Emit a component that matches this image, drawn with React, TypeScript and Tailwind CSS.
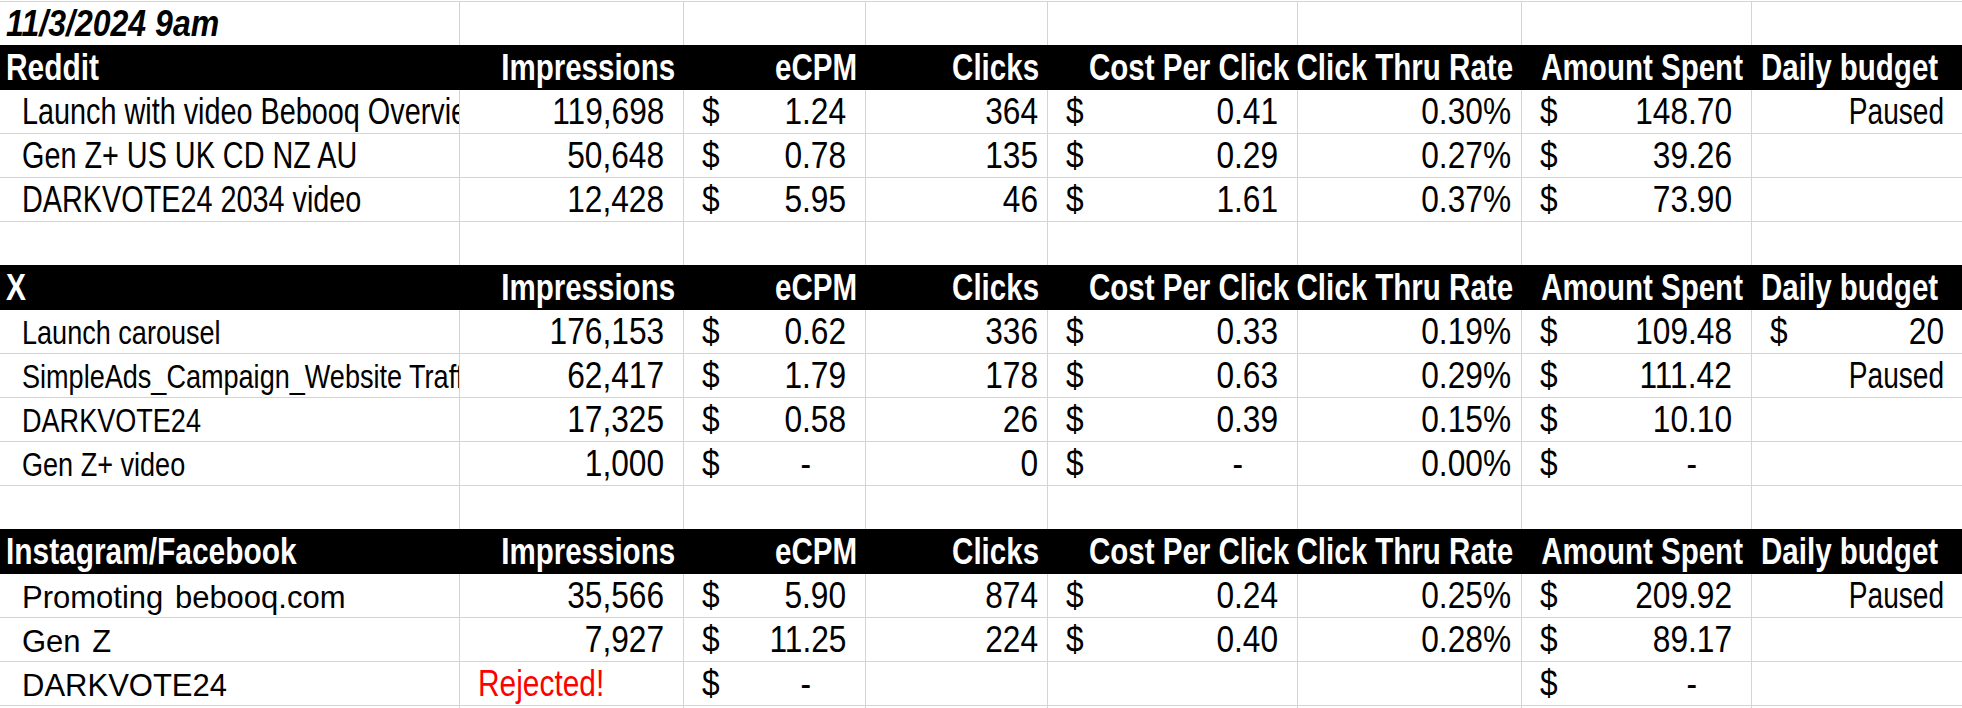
import React from "react";

type Money = string | null | undefined; // null = "-" dash, undefined = empty cell

type AdRow = {
  label: string;
  impressions?: string;
  rejected?: boolean;
  ecpm?: Money;
  clicks?: string;
  cpc?: Money;
  ctr?: string;
  spent?: Money;
  budget?: "paused" | string;
};

type Section = {
  name: string;
  labelClass: string;
  rows: AdRow[];
};

// Excel's Aptos Narrow isn't around, so Liberation Sans gets squeezed horizontally
const sections: Section[] = [
  {
    name: "Reddit",
    labelClass: "text-[36px] scale-x-[0.8]",
    rows: [
      { label: "Launch with video Bebooq Overview", impressions: "119,698", ecpm: "1.24", clicks: "364", cpc: "0.41", ctr: "0.30%", spent: "148.70", budget: "paused" },
      { label: "Gen Z+ US UK CD NZ AU", impressions: "50,648", ecpm: "0.78", clicks: "135", cpc: "0.29", ctr: "0.27%", spent: "39.26" },
      { label: "DARKVOTE24 2034 video", impressions: "12,428", ecpm: "5.95", clicks: "46", cpc: "1.61", ctr: "0.37%", spent: "73.90" },
    ],
  },
  {
    name: "X",
    labelClass: "text-[33px] scale-x-[0.82]",
    rows: [
      { label: "Launch carousel", impressions: "176,153", ecpm: "0.62", clicks: "336", cpc: "0.33", ctr: "0.19%", spent: "109.48", budget: "20" },
      { label: "SimpleAds_Campaign_Website Traffic", impressions: "62,417", ecpm: "1.79", clicks: "178", cpc: "0.63", ctr: "0.29%", spent: "111.42", budget: "paused" },
      { label: "DARKVOTE24", impressions: "17,325", ecpm: "0.58", clicks: "26", cpc: "0.39", ctr: "0.15%", spent: "10.10" },
      { label: "Gen Z+ video", impressions: "1,000", ecpm: null, clicks: "0", cpc: null, ctr: "0.00%", spent: null },
    ],
  },
  {
    name: "Instagram/Facebook",
    labelClass: "text-[31px] [word-spacing:3px]",
    rows: [
      { label: "Promoting bebooq.com", impressions: "35,566", ecpm: "5.90", clicks: "874", cpc: "0.24", ctr: "0.25%", spent: "209.92", budget: "paused" },
      { label: "Gen Z", impressions: "7,927", ecpm: "11.25", clicks: "224", cpc: "0.40", ctr: "0.28%", spent: "89.17" },
      { label: "DARKVOTE24", rejected: true, ecpm: null, spent: null },
    ],
  },
];

const headers = ["Impressions", "eCPM", "Clicks", "Cost Per Click", "Click Thru Rate", "Amount Spent"];

const grid = "grid grid-cols-[460px_224px_182px_182px_250px_224px_230px_212px]";
const cell = "border-r border-[#d4d4d4] overflow-hidden whitespace-nowrap leading-[43px] h-[43px]";
const numR = "inline-block origin-right scale-x-[0.88]";
const numL = "inline-block origin-left scale-x-[0.88]";

function Accounting({ value }: { value: Money }) {
  if (value === undefined) return <div className={cell} />;
  return (
    <div className={`${cell} flex justify-between pl-[18px] ${value === null ? "pr-[54px]" : "pr-[19px]"}`}>
      <span className={numL}>$</span>
      <span className={numR}>{value === null ? "-" : value}</span>
    </div>
  );
}

function Row({ children, top = "border-[#d4d4d4]", black }: { children: React.ReactNode; top?: string; black?: boolean }) {
  return (
    <div className={`${grid} border-t ${top} ${black ? "bg-black text-white font-bold" : ""}`}>{children}</div>
  );
}

function EmptyRow() {
  return (
    <Row>
      {Array.from({ length: 8 }).map((_, i) => (
        <div key={i} className={cell} />
      ))}
    </Row>
  );
}

function HeaderRow({ name }: { name: string }) {
  return (
    <Row top="border-black" black>
      <div className="h-[43px] leading-[43px] pl-[6px] whitespace-nowrap">
        <span className="inline-block origin-left scale-x-[0.83]">{name}</span>
      </div>
      {headers.map((h) => (
        <div key={h} className="flex h-[43px] justify-end leading-[43px] pr-[9px] whitespace-nowrap">
          <span className="inline-block shrink-0 origin-right scale-x-[0.82]">{h}</span>
        </div>
      ))}
      <div className="h-[43px] leading-[43px] pl-[9px] whitespace-nowrap">
        <span className="inline-block origin-left scale-x-[0.82]">Daily budget</span>
      </div>
    </Row>
  );
}

function DataRow({ row, labelClass, first }: { row: AdRow; labelClass: string; first: boolean }) {
  return (
    <Row top={first ? "border-black" : "border-[#d4d4d4]"}>
      <div className={`${cell} pl-[22px]`}>
        <span className={`inline-block origin-left ${labelClass}`}>{row.label}</span>
      </div>
      {row.rejected ? (
        <div className={`${cell} pl-[18px] text-[#ff0000]`}>
          <span className="inline-block origin-left scale-x-[0.83]">Rejected!</span>
        </div>
      ) : (
        <div className={`${cell} pr-[19px] text-right`}>
          <span className={numR}>{row.impressions}</span>
        </div>
      )}
      <Accounting value={row.ecpm} />
      <div className={`${cell} pr-[9px] text-right`}>
        <span className={numR}>{row.clicks}</span>
      </div>
      <Accounting value={row.cpc} />
      <div className={`${cell} pr-[10px] text-right`}>
        <span className={numR}>{row.ctr}</span>
      </div>
      <Accounting value={row.spent} />
      {row.budget === "paused" ? (
        <div className={`${cell} pr-[19px] text-right`}>
          <span className="inline-block origin-right scale-x-[0.78]">Paused</span>
        </div>
      ) : row.budget ? (
        <Accounting value={row.budget} />
      ) : (
        <div className={cell} />
      )}
    </Row>
  );
}

export default function App() {
  return (
    <div className="h-[708px] w-[1962px] overflow-hidden bg-white pt-px text-black text-[36px] font-['Liberation_Sans',Arial,sans-serif]">
      <Row>
        <div className={`${cell} pl-[6px] font-bold italic`}>
          <span className="inline-block origin-left scale-x-[0.89]">11/3/2024 9am</span>
        </div>
        {Array.from({ length: 7 }).map((_, i) => (
          <div key={i} className={cell} />
        ))}
      </Row>
      {sections.map((s, si) => (
        <React.Fragment key={s.name}>
          {si > 0 && <EmptyRow />}
          <HeaderRow name={s.name} />
          {s.rows.map((r, ri) => (
            <DataRow key={r.label + ri} row={r} labelClass={s.labelClass} first={ri === 0} />
          ))}
        </React.Fragment>
      ))}
      <EmptyRow />
    </div>
  );
}
